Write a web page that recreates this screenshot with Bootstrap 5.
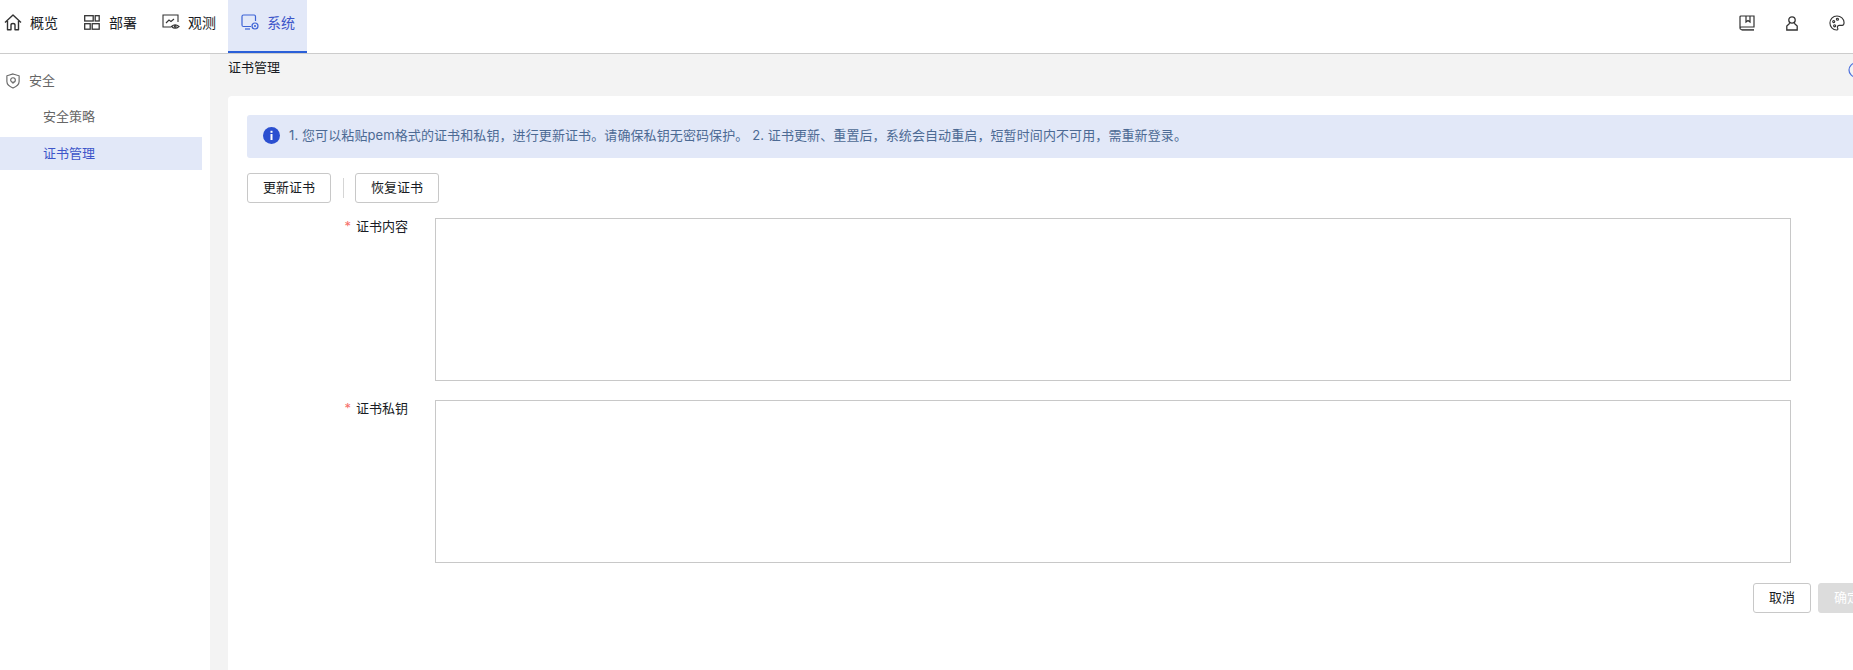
<!DOCTYPE html>
<html lang="zh-CN"><head><meta charset="utf-8"><title>证书管理</title>
<link rel="stylesheet" href="https://cdn.jsdelivr.net/npm/bootstrap@5.3.0/dist/css/bootstrap.min.css">
<style>
html,body{height:670px;overflow:hidden}
body{font-family:Inter,"Noto Sans CJK SC",sans-serif;font-size:13px;color:#191c24;background:#f3f3f3}
.topbar{height:54px;background:#fff;border-bottom:1px solid #ccc}
.tab{height:53px;padding:0 0 7px 0;gap:7px;color:#191c24;font-size:14px;text-decoration:none;border-bottom:2px solid transparent;flex:none}
.tab1{width:83px;padding-left:4px;gap:8px}
.tab2{width:78px;padding-left:1px;gap:9px}
.tab3{width:67px;padding-left:1px;gap:8px}
.tab.on{width:79px;padding-left:13px;gap:8px;background:#e2e8f8;border-bottom-color:#2a5fd8;color:#3d55c9}
.tools{gap:31px;padding:0 8px 7px 0;height:53px}
.side{width:210px;height:616px;background:#fff;padding-top:13px;flex:none}
.sidehead{height:28px;padding-left:5px;gap:8px;color:#666;margin-bottom:5px}
.sideitem{display:block;height:33px;line-height:33px;width:202px;padding-left:43px;color:#666;text-decoration:none;margin-bottom:4px}
.sideitem.on{background:#e2e8f8;color:#3d55c9}
.mainarea{width:1667px;padding-left:18px;flex:none}
.pagetitle{height:42px;line-height:26px;position:relative}
.help{position:absolute;left:1620px;top:8px}
.panel{background:#fff;border-radius:4px 4px 0 0;height:574px;padding:19px}
.tip{height:43px;background:#e2e8f8;border-radius:3px;padding:0 0 2px 16px;gap:9px;color:#4c6a94;margin-bottom:15px;letter-spacing:.1px}
.act{height:30px;width:84px;padding:0;font-size:13px;color:#191c24;border:1px solid #c8c8c8;border-radius:3px;background:#fff;flex:none}
.vline{width:1px;height:20px;background:#d5d5d5;margin:0 11px 0 12px}
.formrow{display:flex;margin-top:15px}
.formrow+.formrow{margin-top:19px}
.lbl{width:188px;text-align:right;padding-right:27px;line-height:17px;flex:none}
.lbl i{color:#f66f6a;font-style:normal;margin-right:5px}
.area{width:1356px;height:163px;border:1px solid #c8c8c8;border-radius:0;resize:none;flex:none;outline:0;display:block}
.foot{margin-top:20px;padding-left:1506px;gap:7px}
.act.cancel{width:58px}
.act.ok{width:58px;background:#dcdcdc;border-color:#dcdcdc;color:#fff}
</style></head><body>
<nav class="topbar d-flex justify-content-between align-items-start">
<div class="d-flex">
<a class="tab tab1 d-flex align-items-center" href="#"><svg width="18" height="17" viewBox="0 0 18 17" fill="none" stroke="#333" stroke-width="1.4" stroke-linejoin="round"><path d="M1 8.500 9 1l8 7.500M3.500 7v8.800H7V11q0-1.500 2-1.500t2 1.500v4.800h3.500V7"/></svg>概览</a>
<a class="tab tab2 d-flex align-items-center" href="#"><svg width="16" height="16" viewBox="0 0 16 16" fill="none" stroke="#333" stroke-width="1.300"><rect x=".7" y="1.700" width="8.500" height="5.300"/><rect x="11.200" y="1.700" width="4" height="5.300"/><rect x=".7" y="9.700" width="5.500" height="5.500"/><rect x="8.200" y="9.700" width="7" height="5.500"/></svg>部署</a>
<a class="tab tab3 d-flex align-items-center" href="#"><svg width="18" height="16" viewBox="0 0 18 16" fill="none" stroke="#333" stroke-width="1.100"><path d="M9 13H1V1h15v7"/><path d="m4 9 3-3 2 1.500L12 5"/><path d="M9.500 12.500q3.500-3.500 7.500 0q-4 3.500-7.500 0z"/><circle cx="13.200" cy="12.500" r=".9"/></svg>观测</a>
<a class="tab on d-flex align-items-center" href="#"><svg width="18" height="16" viewBox="0 0 18 16" fill="none" stroke="#3d63d6" stroke-width="1.200"><path d="M10 12.500H2.500Q1 12.500 1 11V2.500Q1 1 2.500 1h10.500Q14.500 1 14.500 2.500V7"/><path d="M4 15h5"/><circle cx="14" cy="12" r="3"/><path d="m12.800 10.800 2.400 2.400m0-2.400-2.400 2.400" stroke-width=".8"/></svg>系统</a>
</div>
<div class="tools d-flex align-items-center">
<svg width="16" height="16" viewBox="0 0 16 16" fill="none" stroke="#333" stroke-width="1.200"><path d="M1 13V2Q1 1 2 1h13v11H2.500Q1 12 1 13.200T2.500 14.500H15"/><path d="M15 15.200H2.500" stroke-width="1.500" stroke="#777"/><path d="M7 1v6l2-1.500L11 7V1"/></svg>
<svg width="12" height="15" viewBox="0 0 12 15" fill="none" stroke="#333" stroke-width="1.300"><circle cx="6" cy="4" r="3.200"/><path d="M3.800 7.300.8 10v4h10.400v-4L8.200 7.300"/></svg>
<svg width="16" height="16" viewBox="0 0 17 17" fill="none" stroke="#333" stroke-width="1.200"><path d="M8.500 1C4 1 1 4.500 1 8.500S4 16 8 16c2 0 1.500-1.500 1-2.500s.5-2.500 2-2.500h3c1.500 0 2-1 2-3C16 4 12.500 1 8.500 1z"/><circle cx="5" cy="7" r="1.100"/><circle cx="9" cy="4.500" r="1.100"/><circle cx="6" cy="11.500" r="1.100"/></svg>
</div>
</nav>
<div class="d-flex">
<aside class="side">
<div class="sidehead d-flex align-items-center"><svg width="16" height="16" viewBox="0 0 16 17" fill="none" stroke="#666" stroke-width="1.200"><path d="M8 1l6.500 2v6c0 3-3 5.500-6.500 7C4.500 14.500 1.500 12 1.500 9V3z"/><circle cx="8" cy="7.500" r="2.500"/><path d="M8 10v1.500"/></svg>安全</div>
<a class="sideitem" href="#">安全策略</a>
<a class="sideitem on" href="#">证书管理</a>
</aside>
<main class="mainarea">
<div class="pagetitle">证书管理<svg class="help" width="16" height="16" viewBox="0 0 16 16" fill="none" stroke="#4c6fdc" stroke-width="1.200"><circle cx="8" cy="8" r="7"/></svg></div>
<section class="panel">
<div class="tip d-flex align-items-center"><svg width="17" height="17" viewBox="0 0 17 17"><circle cx="8.500" cy="8.500" r="8.500" fill="#2b4fd0"/><rect x="7.500" y="7" width="2" height="6" fill="#fff"/><rect x="7.500" y="3.800" width="2" height="2" fill="#fff"/></svg><span>1. 您可以粘贴pem格式的证书和私钥，进行更新证书。请确保私钥无密码保护。 2. 证书更新、重置后，系统会自动重启，短暂时间内不可用，需重新登录。</span></div>
<div class="d-flex align-items-center"><button class="act btn">更新证书</button><span class="vline"></span><button class="act btn">恢复证书</button></div>
<div class="formrow"><label class="lbl"><i>*</i>证书内容</label><textarea class="area form-control"></textarea></div>
<div class="formrow"><label class="lbl"><i>*</i>证书私钥</label><textarea class="area form-control"></textarea></div>
<div class="foot d-flex"><button class="act cancel btn">取消</button><button class="act ok btn">确定</button></div>
</section>
</main>
</div>
</body></html>
